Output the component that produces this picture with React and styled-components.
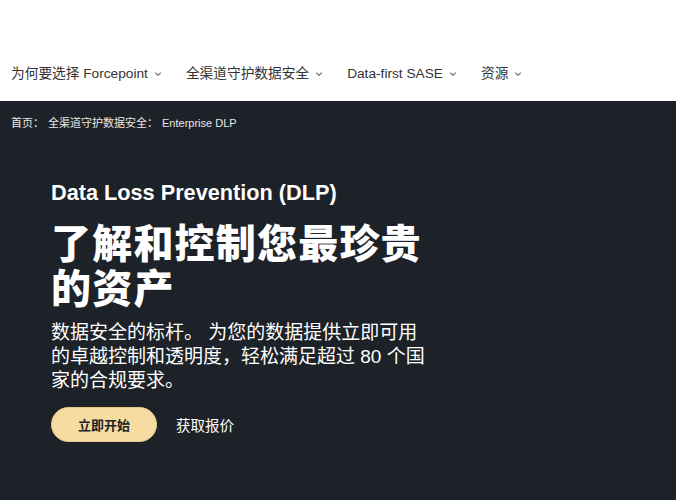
import React from "react";
import styled, { createGlobalStyle } from "styled-components";

const Global = createGlobalStyle`
  html, body { margin: 0; padding: 0; background: #1d2228; }
  body { font-family: "Liberation Sans", "Noto Sans CJK SC", sans-serif; }
  * { box-sizing: border-box; }
`;

const Page = styled.div`
  width: 676px;
  height: 500px;
  overflow: hidden;
  display: flex;
  flex-direction: column;
  background: #1d2228;
`;

const Header = styled.header`
  height: 101px;
  background: #ffffff;
  display: flex;
  align-items: flex-end;
  padding: 0 0 17px 11px;
`;

const Nav = styled.nav`
  display: flex;
  align-items: center;
  gap: 24px;
`;

const NavItem = styled.a`
  display: flex;
  align-items: center;
  gap: 6px;
  font-size: 13.7px;
  color: #333333;
  text-decoration: none;
  line-height: 20px;
`;

const Chevron = () => (
  <svg width="8" height="6" viewBox="0 0 8 6" fill="none">
    <path d="M1.2 1.6 L4 4.3 L6.8 1.6" stroke="#777" strokeWidth="1.2" />
  </svg>
);

const Crumbs = styled.div`
  display: flex;
  gap: 4px;
  padding: 14px 11px 0;
  font-size: 11px;
  color: #e8e8e8;
  line-height: 16px;
`;

const Hero = styled.section`
  padding: 49px 0 0 51px;
  display: flex;
  flex-direction: column;
  width: 436px;
`;

const Eyebrow = styled.h2`
  margin: 0;
  font-size: 21.7px;
  font-weight: 700;
  color: #ffffff;
  line-height: 26px;
`;

const Title = styled.h1`
  margin: 16px 0 0;
  font-size: 40px;
  font-weight: 900;
  color: #ffffff;
  line-height: 45px;
  letter-spacing: 1.2px;
`;

const Lead = styled.p`
  margin: 9px 0 0;
  width: 380px;
  font-size: 19px;
  color: #ffffff;
  line-height: 24px;
`;

const Actions = styled.div`
  display: flex;
  align-items: center;
  gap: 19px;
  margin-top: 14px;
`;

const Primary = styled.button`
  width: 106px;
  height: 35px;
  border-radius: 18px;
  border: 1px solid #e9c985;
  background: #f6dca0;
  color: #1d2228;
  font-family: inherit;
  font-size: 13px;
  font-weight: 700;
  cursor: pointer;
`;

const Secondary = styled.a`
  color: #ffffff;
  font-size: 14.5px;
  text-decoration: none;
`;

export default function App() {
  return (
    <Page>
      <Global />
      <Header>
        <Nav>
          <NavItem>为何要选择 Forcepoint <Chevron /></NavItem>
          <NavItem>全渠道守护数据安全 <Chevron /></NavItem>
          <NavItem>Data-first SASE <Chevron /></NavItem>
          <NavItem>资源 <Chevron /></NavItem>
        </Nav>
      </Header>
      <Crumbs>
        <span>首页：</span>
        <span>全渠道守护数据安全：</span>
        <span>Enterprise DLP</span>
      </Crumbs>
      <Hero>
        <Eyebrow>Data Loss Prevention (DLP)</Eyebrow>
        <Title>了解和控制您最珍贵的资产</Title>
        <Lead>数据安全的标杆。 为您的数据提供立即可用的卓越控制和透明度，轻松满足超过 80 个国家的合规要求。</Lead>
        <Actions>
          <Primary>立即开始</Primary>
          <Secondary>获取报价</Secondary>
        </Actions>
      </Hero>
    </Page>
  );
}
